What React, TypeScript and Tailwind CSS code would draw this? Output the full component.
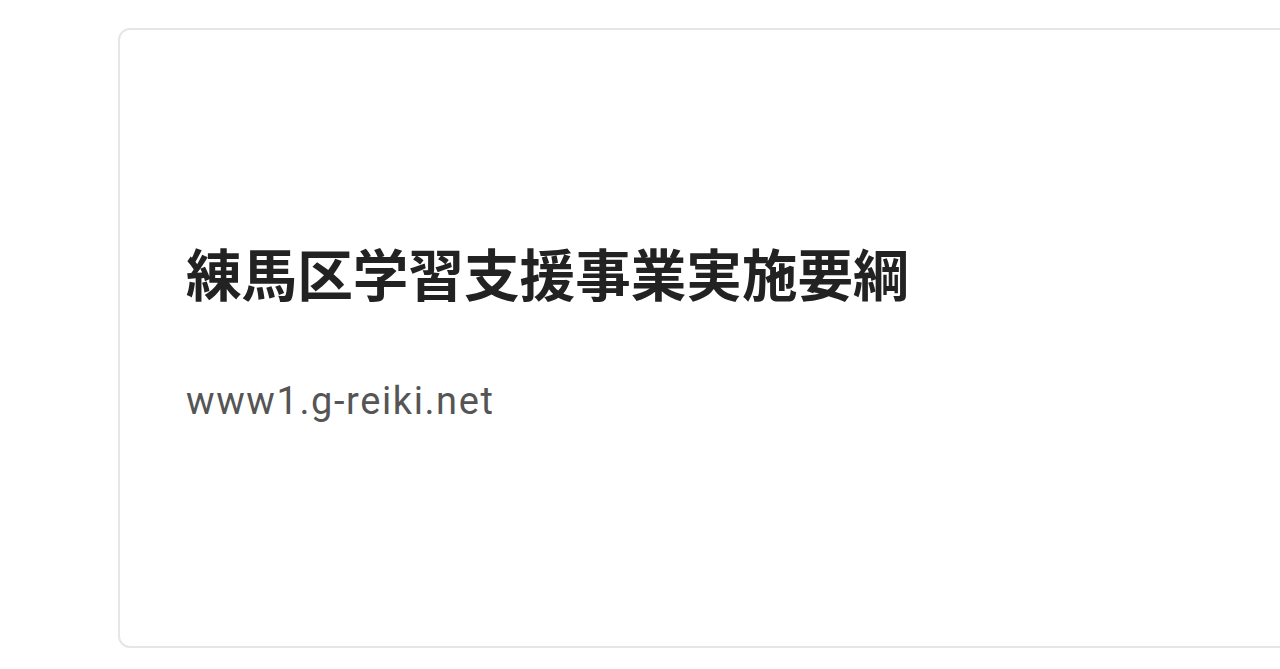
export default function App() {
  return (
    <div className="min-h-screen w-full bg-white overflow-hidden">
      <div className="pt-[28px] pl-[118px]">
        <div className="w-[1200px] h-[620px] rounded-[12px] border-2 border-[#e6e6e6] bg-white flex flex-col pt-[215px] pl-[66px]">
          <h1 className="text-[55.6px] leading-none font-bold text-[#222222] [font-family:'Noto_Sans_CJK_JP',sans-serif]">
            練馬区学習支援事業実施要綱
          </h1>
          <p className="mt-[81px] text-[38px] leading-none tracking-[1.6px] text-[#555555] [font-family:Roboto,'Noto_Sans',sans-serif]">
            www1.g-reiki.net
          </p>
        </div>
      </div>
    </div>
  );
}
